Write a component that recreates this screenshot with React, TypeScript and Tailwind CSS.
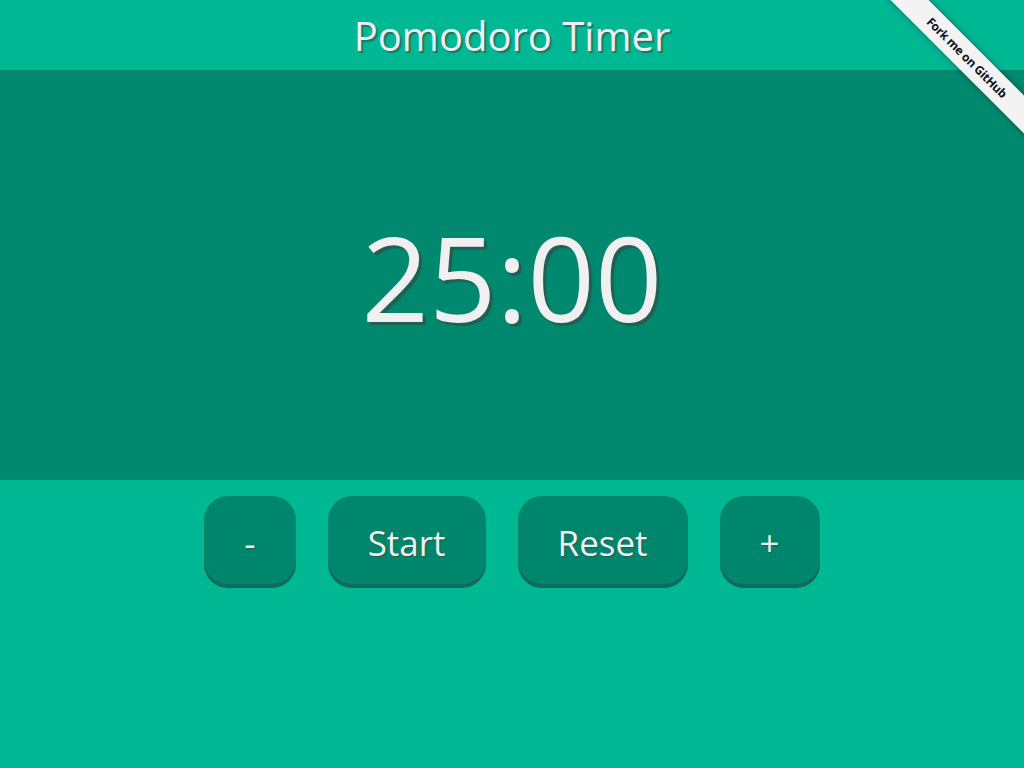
import * as React from "react"

const buttons = ["-", "Start", "Reset", "+"]

function ForkRibbon() {
  return (
    <div className="absolute top-0 right-0 w-[140px] h-[140px] overflow-hidden pointer-events-none">
      <a
        href="#"
        className="absolute left-[-17px] top-[44px] w-[200px] h-[27px] rotate-45 bg-[#f3f3f3] shadow-[0_0_6px_rgba(0,0,0,0.45)] flex items-center justify-center text-[12px] font-bold text-[#111] tracking-tight"
      >
        Fork me on GitHub
      </a>
    </div>
  )
}

export default function App() {
  const [seconds, setSeconds] = React.useState(25 * 60)
  const mm = String(Math.floor(seconds / 60)).padStart(2, "0")
  const ss = String(seconds % 60).padStart(2, "0")

  return (
    <div className="relative min-h-[768px] bg-[#00b894] text-[#f0f0f0] font-['Open_Sans',sans-serif]">
      {/* Header */}
      <header className="h-[70px] flex items-center justify-center pt-[2px]">
        <h1 className="text-[40px] leading-none [text-shadow:2px_2px_1px_rgba(60,60,60,0.55)]">
          Pomodoro Timer
        </h1>
      </header>

      {/* Timer panel */}
      <section className="h-[410px] bg-[#00896f] flex items-center justify-center pt-[4px]">
        <span className="text-[118px] leading-none [text-shadow:3px_3px_1px_rgba(60,60,60,0.55)]">
          {mm}:{ss}
        </span>
      </section>

      {/* Controls */}
      <div className="flex justify-center gap-8 mt-4">
        {buttons.map((label) => (
          <button
            key={label}
            type="button"
            onClick={() => {
              if (label === "-") setSeconds((s) => Math.max(60, s - 60))
              if (label === "+") setSeconds((s) => s + 60)
              if (label === "Reset") setSeconds(25 * 60)
            }}
            className="h-[88px] px-[40px] pt-[4px] rounded-[24px] bg-[#00866c] shadow-[0_4px_0_#12695d] text-[35px] leading-none [text-shadow:1px_1px_1px_rgba(60,60,60,0.6)]"
          >
            {label}
          </button>
        ))}
      </div>

      <ForkRibbon />
    </div>
  )
}
